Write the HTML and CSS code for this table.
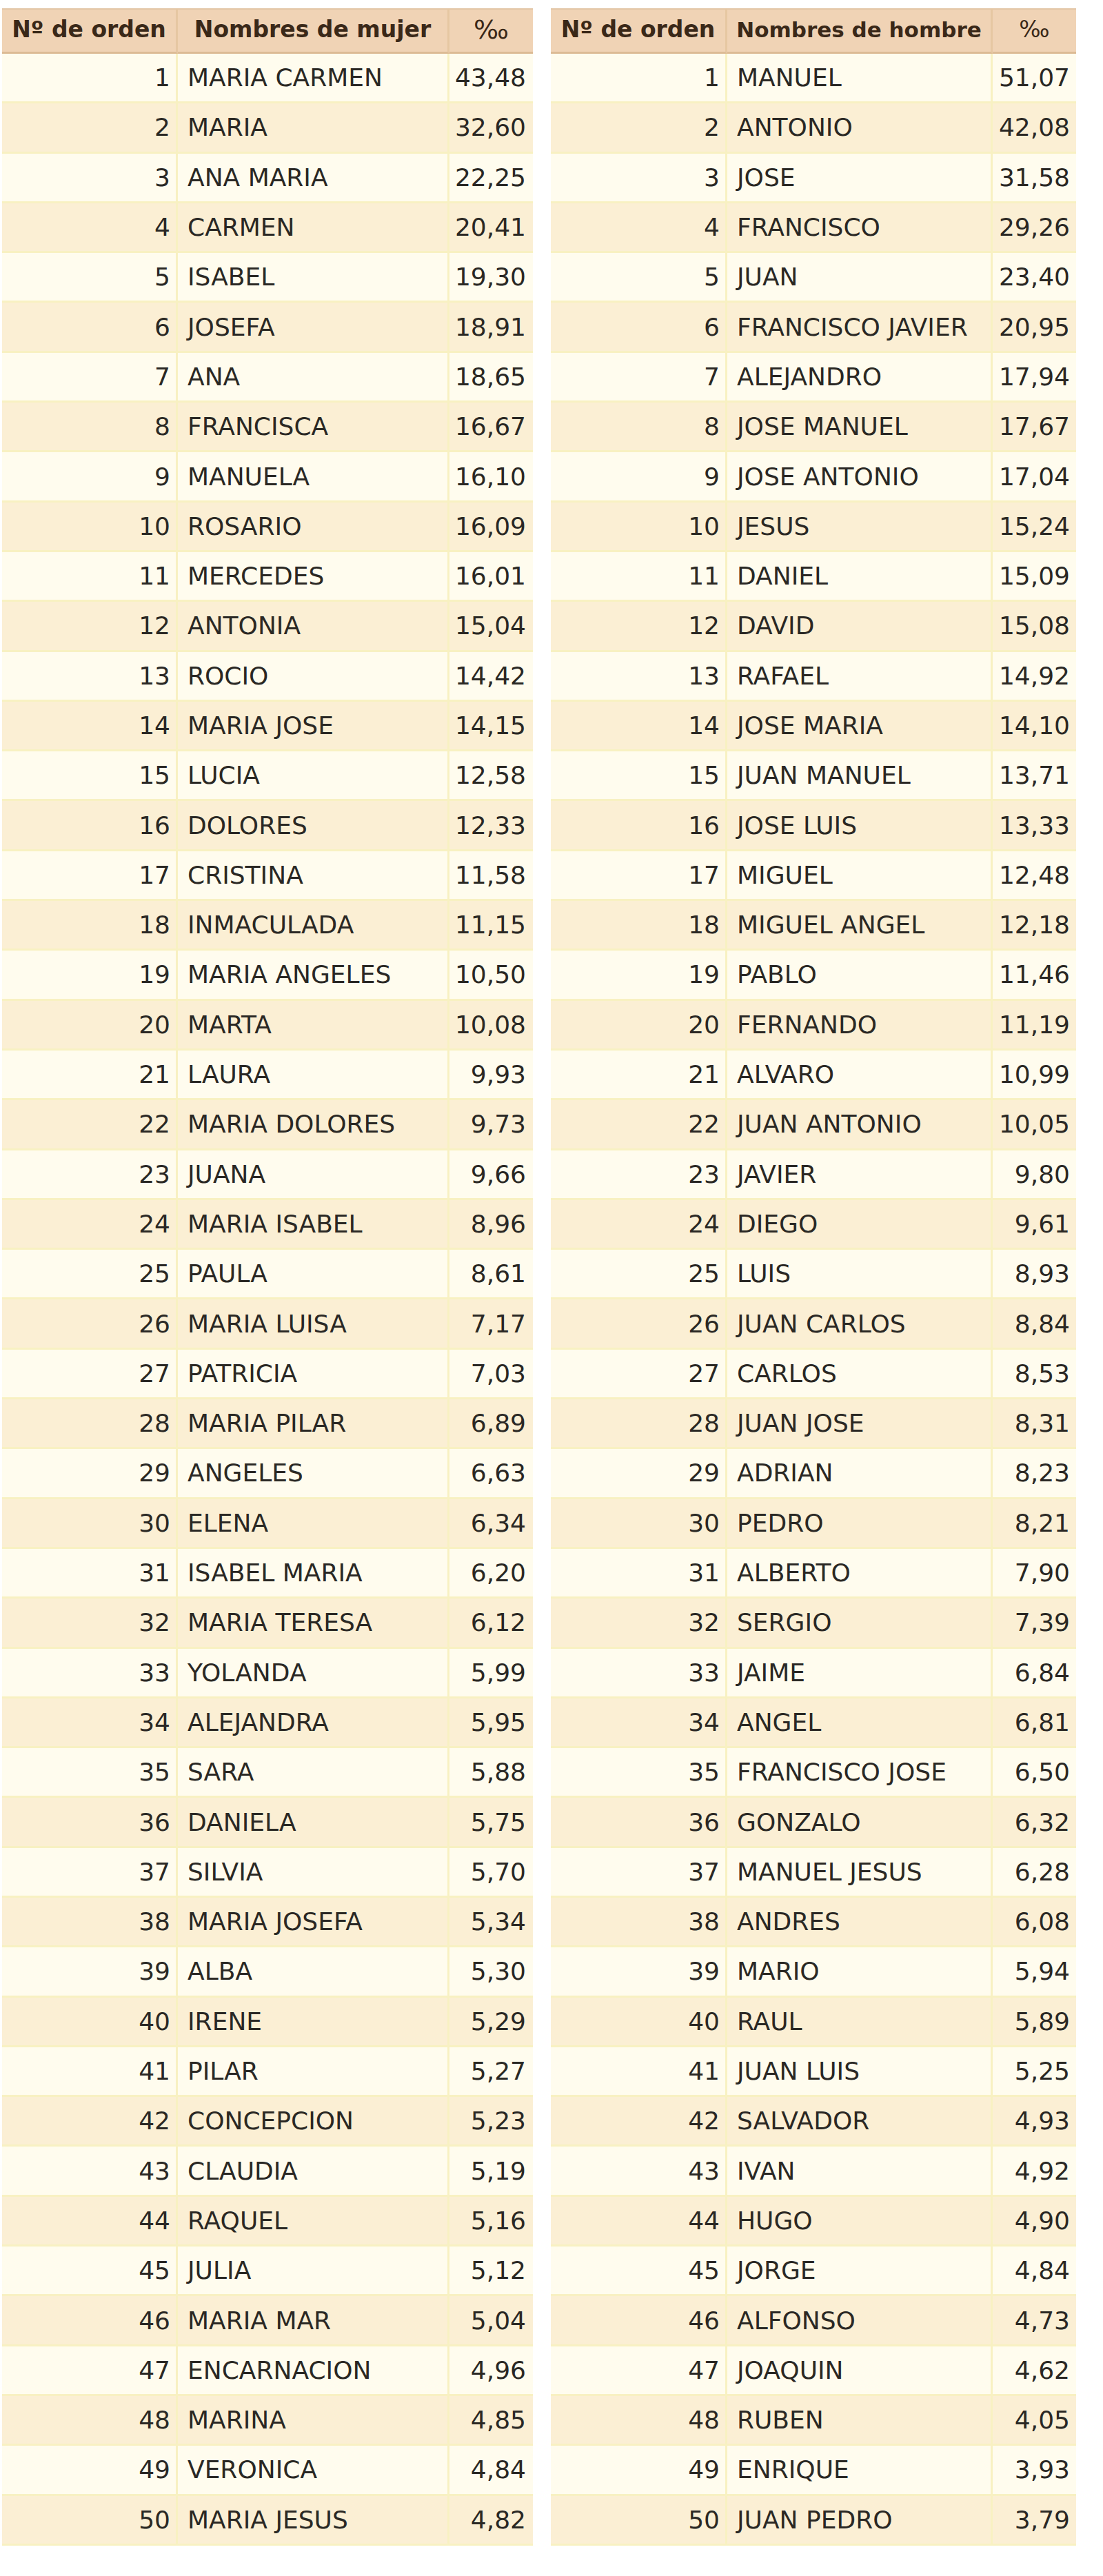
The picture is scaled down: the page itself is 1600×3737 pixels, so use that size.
FILE: index.html
```html
<!DOCTYPE html>
<html lang="es">
<head>
<meta charset="utf-8">
<title>Nombres más frecuentes</title>
<link rel="stylesheet" href="styles.css">
</head>
<body>
<div class="page">
  <div class="tbl tbl-w">
    <div class="row head">
      <div class="cell">Nº de orden</div>
      <div class="cell">Nombres de mujer</div>
      <div class="cell permil">‰</div>
    </div>
    <div class="row"><div class="cell num">1</div><div class="cell name">MARIA CARMEN</div><div class="cell pct">43,48</div></div>
    <div class="row"><div class="cell num">2</div><div class="cell name">MARIA</div><div class="cell pct">32,60</div></div>
    <div class="row"><div class="cell num">3</div><div class="cell name">ANA MARIA</div><div class="cell pct">22,25</div></div>
    <div class="row"><div class="cell num">4</div><div class="cell name">CARMEN</div><div class="cell pct">20,41</div></div>
    <div class="row"><div class="cell num">5</div><div class="cell name">ISABEL</div><div class="cell pct">19,30</div></div>
    <div class="row"><div class="cell num">6</div><div class="cell name">JOSEFA</div><div class="cell pct">18,91</div></div>
    <div class="row"><div class="cell num">7</div><div class="cell name">ANA</div><div class="cell pct">18,65</div></div>
    <div class="row"><div class="cell num">8</div><div class="cell name">FRANCISCA</div><div class="cell pct">16,67</div></div>
    <div class="row"><div class="cell num">9</div><div class="cell name">MANUELA</div><div class="cell pct">16,10</div></div>
    <div class="row"><div class="cell num">10</div><div class="cell name">ROSARIO</div><div class="cell pct">16,09</div></div>
    <div class="row"><div class="cell num">11</div><div class="cell name">MERCEDES</div><div class="cell pct">16,01</div></div>
    <div class="row"><div class="cell num">12</div><div class="cell name">ANTONIA</div><div class="cell pct">15,04</div></div>
    <div class="row"><div class="cell num">13</div><div class="cell name">ROCIO</div><div class="cell pct">14,42</div></div>
    <div class="row"><div class="cell num">14</div><div class="cell name">MARIA JOSE</div><div class="cell pct">14,15</div></div>
    <div class="row"><div class="cell num">15</div><div class="cell name">LUCIA</div><div class="cell pct">12,58</div></div>
    <div class="row"><div class="cell num">16</div><div class="cell name">DOLORES</div><div class="cell pct">12,33</div></div>
    <div class="row"><div class="cell num">17</div><div class="cell name">CRISTINA</div><div class="cell pct">11,58</div></div>
    <div class="row"><div class="cell num">18</div><div class="cell name">INMACULADA</div><div class="cell pct">11,15</div></div>
    <div class="row"><div class="cell num">19</div><div class="cell name">MARIA ANGELES</div><div class="cell pct">10,50</div></div>
    <div class="row"><div class="cell num">20</div><div class="cell name">MARTA</div><div class="cell pct">10,08</div></div>
    <div class="row"><div class="cell num">21</div><div class="cell name">LAURA</div><div class="cell pct">9,93</div></div>
    <div class="row"><div class="cell num">22</div><div class="cell name">MARIA DOLORES</div><div class="cell pct">9,73</div></div>
    <div class="row"><div class="cell num">23</div><div class="cell name">JUANA</div><div class="cell pct">9,66</div></div>
    <div class="row"><div class="cell num">24</div><div class="cell name">MARIA ISABEL</div><div class="cell pct">8,96</div></div>
    <div class="row"><div class="cell num">25</div><div class="cell name">PAULA</div><div class="cell pct">8,61</div></div>
    <div class="row"><div class="cell num">26</div><div class="cell name">MARIA LUISA</div><div class="cell pct">7,17</div></div>
    <div class="row"><div class="cell num">27</div><div class="cell name">PATRICIA</div><div class="cell pct">7,03</div></div>
    <div class="row"><div class="cell num">28</div><div class="cell name">MARIA PILAR</div><div class="cell pct">6,89</div></div>
    <div class="row"><div class="cell num">29</div><div class="cell name">ANGELES</div><div class="cell pct">6,63</div></div>
    <div class="row"><div class="cell num">30</div><div class="cell name">ELENA</div><div class="cell pct">6,34</div></div>
    <div class="row"><div class="cell num">31</div><div class="cell name">ISABEL MARIA</div><div class="cell pct">6,20</div></div>
    <div class="row"><div class="cell num">32</div><div class="cell name">MARIA TERESA</div><div class="cell pct">6,12</div></div>
    <div class="row"><div class="cell num">33</div><div class="cell name">YOLANDA</div><div class="cell pct">5,99</div></div>
    <div class="row"><div class="cell num">34</div><div class="cell name">ALEJANDRA</div><div class="cell pct">5,95</div></div>
    <div class="row"><div class="cell num">35</div><div class="cell name">SARA</div><div class="cell pct">5,88</div></div>
    <div class="row"><div class="cell num">36</div><div class="cell name">DANIELA</div><div class="cell pct">5,75</div></div>
    <div class="row"><div class="cell num">37</div><div class="cell name">SILVIA</div><div class="cell pct">5,70</div></div>
    <div class="row"><div class="cell num">38</div><div class="cell name">MARIA JOSEFA</div><div class="cell pct">5,34</div></div>
    <div class="row"><div class="cell num">39</div><div class="cell name">ALBA</div><div class="cell pct">5,30</div></div>
    <div class="row"><div class="cell num">40</div><div class="cell name">IRENE</div><div class="cell pct">5,29</div></div>
    <div class="row"><div class="cell num">41</div><div class="cell name">PILAR</div><div class="cell pct">5,27</div></div>
    <div class="row"><div class="cell num">42</div><div class="cell name">CONCEPCION</div><div class="cell pct">5,23</div></div>
    <div class="row"><div class="cell num">43</div><div class="cell name">CLAUDIA</div><div class="cell pct">5,19</div></div>
    <div class="row"><div class="cell num">44</div><div class="cell name">RAQUEL</div><div class="cell pct">5,16</div></div>
    <div class="row"><div class="cell num">45</div><div class="cell name">JULIA</div><div class="cell pct">5,12</div></div>
    <div class="row"><div class="cell num">46</div><div class="cell name">MARIA MAR</div><div class="cell pct">5,04</div></div>
    <div class="row"><div class="cell num">47</div><div class="cell name">ENCARNACION</div><div class="cell pct">4,96</div></div>
    <div class="row"><div class="cell num">48</div><div class="cell name">MARINA</div><div class="cell pct">4,85</div></div>
    <div class="row"><div class="cell num">49</div><div class="cell name">VERONICA</div><div class="cell pct">4,84</div></div>
    <div class="row"><div class="cell num">50</div><div class="cell name">MARIA JESUS</div><div class="cell pct">4,82</div></div>
  </div>

  <div class="tbl tbl-m">
    <div class="row head">
      <div class="cell">Nº de orden</div>
      <div class="cell small">Nombres de hombre</div>
      <div class="cell permil small">‰</div>
    </div>
    <div class="row"><div class="cell num">1</div><div class="cell name">MANUEL</div><div class="cell pct">51,07</div></div>
    <div class="row"><div class="cell num">2</div><div class="cell name">ANTONIO</div><div class="cell pct">42,08</div></div>
    <div class="row"><div class="cell num">3</div><div class="cell name">JOSE</div><div class="cell pct">31,58</div></div>
    <div class="row"><div class="cell num">4</div><div class="cell name">FRANCISCO</div><div class="cell pct">29,26</div></div>
    <div class="row"><div class="cell num">5</div><div class="cell name">JUAN</div><div class="cell pct">23,40</div></div>
    <div class="row"><div class="cell num">6</div><div class="cell name">FRANCISCO JAVIER</div><div class="cell pct">20,95</div></div>
    <div class="row"><div class="cell num">7</div><div class="cell name">ALEJANDRO</div><div class="cell pct">17,94</div></div>
    <div class="row"><div class="cell num">8</div><div class="cell name">JOSE MANUEL</div><div class="cell pct">17,67</div></div>
    <div class="row"><div class="cell num">9</div><div class="cell name">JOSE ANTONIO</div><div class="cell pct">17,04</div></div>
    <div class="row"><div class="cell num">10</div><div class="cell name">JESUS</div><div class="cell pct">15,24</div></div>
    <div class="row"><div class="cell num">11</div><div class="cell name">DANIEL</div><div class="cell pct">15,09</div></div>
    <div class="row"><div class="cell num">12</div><div class="cell name">DAVID</div><div class="cell pct">15,08</div></div>
    <div class="row"><div class="cell num">13</div><div class="cell name">RAFAEL</div><div class="cell pct">14,92</div></div>
    <div class="row"><div class="cell num">14</div><div class="cell name">JOSE MARIA</div><div class="cell pct">14,10</div></div>
    <div class="row"><div class="cell num">15</div><div class="cell name">JUAN MANUEL</div><div class="cell pct">13,71</div></div>
    <div class="row"><div class="cell num">16</div><div class="cell name">JOSE LUIS</div><div class="cell pct">13,33</div></div>
    <div class="row"><div class="cell num">17</div><div class="cell name">MIGUEL</div><div class="cell pct">12,48</div></div>
    <div class="row"><div class="cell num">18</div><div class="cell name">MIGUEL ANGEL</div><div class="cell pct">12,18</div></div>
    <div class="row"><div class="cell num">19</div><div class="cell name">PABLO</div><div class="cell pct">11,46</div></div>
    <div class="row"><div class="cell num">20</div><div class="cell name">FERNANDO</div><div class="cell pct">11,19</div></div>
    <div class="row"><div class="cell num">21</div><div class="cell name">ALVARO</div><div class="cell pct">10,99</div></div>
    <div class="row"><div class="cell num">22</div><div class="cell name">JUAN ANTONIO</div><div class="cell pct">10,05</div></div>
    <div class="row"><div class="cell num">23</div><div class="cell name">JAVIER</div><div class="cell pct">9,80</div></div>
    <div class="row"><div class="cell num">24</div><div class="cell name">DIEGO</div><div class="cell pct">9,61</div></div>
    <div class="row"><div class="cell num">25</div><div class="cell name">LUIS</div><div class="cell pct">8,93</div></div>
    <div class="row"><div class="cell num">26</div><div class="cell name">JUAN CARLOS</div><div class="cell pct">8,84</div></div>
    <div class="row"><div class="cell num">27</div><div class="cell name">CARLOS</div><div class="cell pct">8,53</div></div>
    <div class="row"><div class="cell num">28</div><div class="cell name">JUAN JOSE</div><div class="cell pct">8,31</div></div>
    <div class="row"><div class="cell num">29</div><div class="cell name">ADRIAN</div><div class="cell pct">8,23</div></div>
    <div class="row"><div class="cell num">30</div><div class="cell name">PEDRO</div><div class="cell pct">8,21</div></div>
    <div class="row"><div class="cell num">31</div><div class="cell name">ALBERTO</div><div class="cell pct">7,90</div></div>
    <div class="row"><div class="cell num">32</div><div class="cell name">SERGIO</div><div class="cell pct">7,39</div></div>
    <div class="row"><div class="cell num">33</div><div class="cell name">JAIME</div><div class="cell pct">6,84</div></div>
    <div class="row"><div class="cell num">34</div><div class="cell name">ANGEL</div><div class="cell pct">6,81</div></div>
    <div class="row"><div class="cell num">35</div><div class="cell name">FRANCISCO JOSE</div><div class="cell pct">6,50</div></div>
    <div class="row"><div class="cell num">36</div><div class="cell name">GONZALO</div><div class="cell pct">6,32</div></div>
    <div class="row"><div class="cell num">37</div><div class="cell name">MANUEL JESUS</div><div class="cell pct">6,28</div></div>
    <div class="row"><div class="cell num">38</div><div class="cell name">ANDRES</div><div class="cell pct">6,08</div></div>
    <div class="row"><div class="cell num">39</div><div class="cell name">MARIO</div><div class="cell pct">5,94</div></div>
    <div class="row"><div class="cell num">40</div><div class="cell name">RAUL</div><div class="cell pct">5,89</div></div>
    <div class="row"><div class="cell num">41</div><div class="cell name">JUAN LUIS</div><div class="cell pct">5,25</div></div>
    <div class="row"><div class="cell num">42</div><div class="cell name">SALVADOR</div><div class="cell pct">4,93</div></div>
    <div class="row"><div class="cell num">43</div><div class="cell name">IVAN</div><div class="cell pct">4,92</div></div>
    <div class="row"><div class="cell num">44</div><div class="cell name">HUGO</div><div class="cell pct">4,90</div></div>
    <div class="row"><div class="cell num">45</div><div class="cell name">JORGE</div><div class="cell pct">4,84</div></div>
    <div class="row"><div class="cell num">46</div><div class="cell name">ALFONSO</div><div class="cell pct">4,73</div></div>
    <div class="row"><div class="cell num">47</div><div class="cell name">JOAQUIN</div><div class="cell pct">4,62</div></div>
    <div class="row"><div class="cell num">48</div><div class="cell name">RUBEN</div><div class="cell pct">4,05</div></div>
    <div class="row"><div class="cell num">49</div><div class="cell name">ENRIQUE</div><div class="cell pct">3,93</div></div>
    <div class="row"><div class="cell num">50</div><div class="cell name">JUAN PEDRO</div><div class="cell pct">3,79</div></div>
  </div>
</div>
</body>
</html>
```

FILE: styles.css
```css
html, body {
  margin: 0;
  padding: 0;
  background: #ffffff;
}

body {
  font-family: "DejaVu Sans", Verdana, sans-serif;
  color: #2a2824;
}

.page {
  display: flex;
  align-items: flex-start;
  gap: 26px;
  padding: 12px 0 0 3px;
}

.tbl {
  display: flex;
  flex-direction: column;
  background: #f9f3cc;
}

.row {
  display: grid;
  height: 72.3px;
  box-sizing: border-box;
}

.tbl-w .row {
  grid-template-columns: 255px 394px 121px;
}

.tbl-m .row {
  grid-template-columns: 256px 385px 121px;
}

.cell {
  display: flex;
  align-items: center;
  box-sizing: border-box;
  font-size: 36px;
  white-space: nowrap;
  overflow: hidden;
  border-right: 3px solid #f8f1c2;
  border-bottom: 3px solid #f8f1c2;
}

.cell:last-child {
  border-right: 0;
}

.row:nth-child(even) .cell {
  background: #fffcee;
}

.row:nth-child(odd) .cell {
  background: #fbefd4;
}

.num {
  justify-content: flex-end;
  padding-right: 8px;
}

.name {
  padding-left: 14px;
}

.pct {
  justify-content: flex-end;
  padding-right: 10px;
}

.tbl-m .pct {
  padding-right: 9px;
}

/* header */
.row.head {
  height: 66px;
}

.row.head .cell {
  background: #f0d3b5;
  justify-content: center;
  font-weight: bold;
  font-size: 33px;
  color: #3a2818;
  border-top: 2px solid #e3c6a6;
  border-right: 3px solid #e6c7a2;
  border-bottom: 3px solid #dcbb95;
  padding-bottom: 4px;
}

.row.head .cell:last-child {
  border-right: 0;
}

.row.head .cell.small {
  font-size: 31px;
}

.row.head .permil {
  font-size: 38px;
  font-weight: normal;
}

.row.head .permil.small {
  font-size: 33px;
}
```
